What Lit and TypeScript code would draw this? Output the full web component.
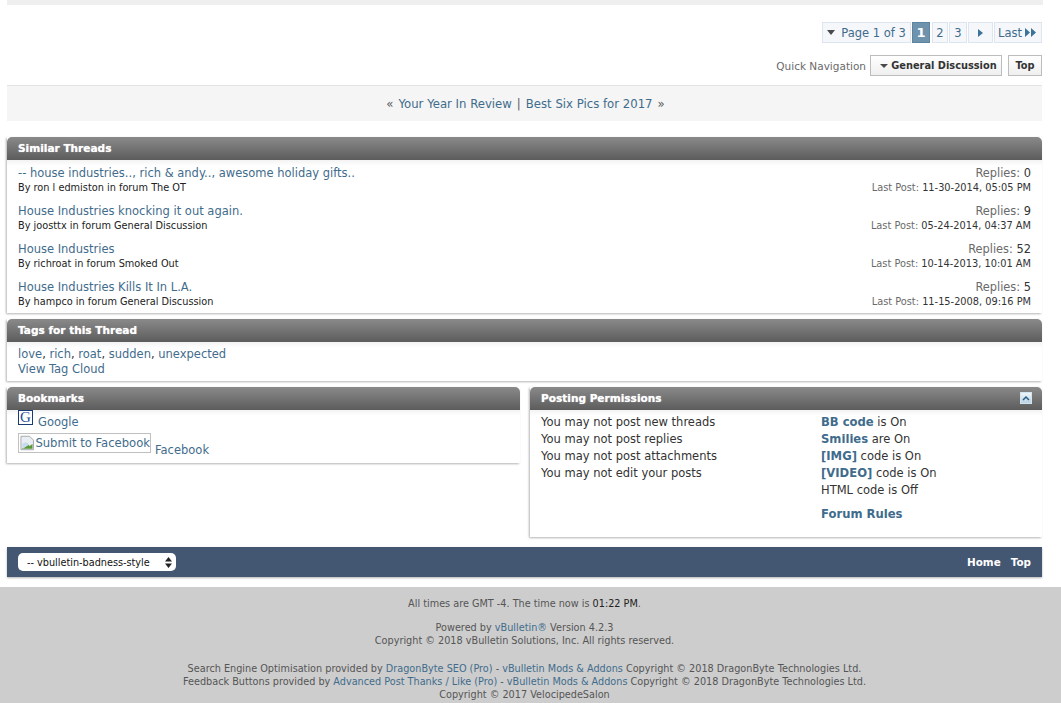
import { LitElement, html, css } from "lit";
import { customElement } from "lit/decorators.js";

const threads = [
  ["-- house industries.., rich & andy.., awesome holiday gifts..", "ron l edmiston", "The OT", "0", "11-30-2014, 05:05 PM"],
  ["House Industries knocking it out again.", "joosttx", "General Discussion", "9", "05-24-2014, 04:37 AM"],
  ["House Industries", "richroat", "Smoked Out", "52", "10-14-2013, 10:01 AM"],
  ["House Industries Kills It In L.A.", "hampco", "General Discussion", "5", "11-15-2008, 09:16 PM"],
];

@customElement("app-root")
export class AppRoot extends LitElement {
  static styles = css`
    :host { display: block; height: 703px; overflow: hidden; background: #fff; font-family: "DejaVu Sans", Verdana, sans-serif; color: #3e3e3e; font-size: 11.5px; }
    a { color: #3f6c8c; text-decoration: none; }
    .main { padding: 0 19px 0 7px; }
    .topband { height: 5px; background: #efefef; margin-right: -1px; }
    .pager { display: flex; justify-content: flex-end; gap: 1px; margin-top: 17px; height: 21px; font-size: 11.5px; }
    .pg { border: 1px solid #dde6f0; background: #f5f7fb; color: #3f6c8c; display: flex; align-items: center; justify-content: center; box-sizing: border-box; height: 21px; }
    .pg.label { width: 89px; gap: 6px; }
    .pg.cur { width: 18px; background: #6f93ad; border-color: #5c83a0; color: #fff; font-weight: bold; font-size: 13px; }
    .pg.n2 { width: 16px; margin-left: 1px; }
    .pg.n3 { width: 18px; }
    .pg.next { width: 25px; }
    .pg.last { width: 48px; gap: 3px; justify-content: flex-start; padding-left: 3px; }
    .tri-d { width: 0; height: 0; border: 4px solid transparent; border-top: 5px solid #4a4a4a; border-bottom: 0; }
    .tri-r { width: 0; height: 0; border: 4px solid transparent; border-left: 5px solid #3e7399; border-right: 0; }
    .qn { display: flex; justify-content: flex-end; align-items: center; margin-top: 12px; height: 21px; }
    .qn .lbl { color: #6a6a6a; margin-right: 4px; font-size: 10.5px; }
    .qbtn { border: 1px solid #bdbdbd; background: linear-gradient(#fff, #efefef); height: 21px; box-sizing: border-box; display: flex; align-items: center; justify-content: center; font-weight: bold; font-size: 9.8px; color: #333; }
    .qbtn.gd { width: 132px; gap: 3px; margin-right: 6px; padding-left: 5px; }
    .qbtn.gd .tri-d { border-width: 4px; border-top-width: 4px; border-bottom: 0; }
    .qbtn.top { width: 34px; }
    .prevnext { margin-top: 9px; height: 35px; background: #f5f5f5; border-top: 1px solid #e4e4e4; display: flex; align-items: center; justify-content: center; font-size: 11.7px; color: #5a5a5a; gap: 5px; padding-left: 2px; }
    .block { box-shadow: -1px 1px 2px #b5b5b5; background: #fff; }
    .head { height: 23px; border-radius: 5px 5px 0 0; background: linear-gradient(#8a8a8a, #5c5c5c); color: #fff; font-weight: bold; font-size: 10.55px; display: flex; align-items: center; justify-content: space-between; padding: 0 11px 1px; box-sizing: border-box; text-shadow: 0 0 1px #ddd; }
    .body { background: linear-gradient(#f3f3f3, #fff 6px); }
    .similar { margin-top: 16px; }
    .similar .body { padding: 6px 11px 3px 11px; height: 153px; box-sizing: border-box; }
    .thr { display: flex; justify-content: space-between; height: 38px; }
    .thr .t { font-size: 11.5px; line-height: 15px; display: block; }
    .thr .s { font-size: 9.75px; line-height: 14px; color: #222; }
    .thr .r { text-align: right; }
    .rep { font-size: 11.4px; line-height: 15px; color: #6a6a6a; }
    .rep b { font-weight: normal; color: #333; }
    .lp { font-size: 9.8px; line-height: 14px; color: #6a6a6a; }
    .lp b { font-weight: normal; color: #333; }
    .tags { margin-top: 6px; }
    .tags .body { height: 39px; box-sizing: border-box; padding: 5px 11px 0; font-size: 11.5px; line-height: 15px; color: #333; }
    .cols { display: flex; gap: 10px; margin-top: 6px; align-items: flex-start; }
    .bm { width: 513px; flex: none; }
    .bm .body { height: 53px; box-sizing: border-box; padding: 0 11px; font-size: 11.5px; }
    .row1 { height: 23px; display: flex; gap: 5px; }
    .row1 a { line-height: 24px; }
    .g { width: 15px; height: 15px; box-sizing: border-box; border: 1px solid #1a3a78; font: 15px/13px "Liberation Serif", serif; color: #1e4e9a; text-align: center; background: #fff; }
    .row2 { display: flex; gap: 4px; height: 28px; }
    .broken { width: 133px; height: 20px; box-sizing: border-box; border: 1px solid #c0c0c0; display: flex; align-items: center; color: #3f6c8c; white-space: nowrap; overflow: hidden; padding-left: 1px; font-size: 11.6px; }
    .row2 a.fb { align-self: flex-end; line-height: 15px; margin-bottom: 3px; }
    .pp { flex: 1; }
    .pp .body { height: 127px; box-sizing: border-box; padding: 4px 11px; display: flex; font-size: 11.5px; line-height: 17px; color: #333; }
    .pp .c1 { width: 280px; }
    .pp .c2 a { font-weight: bold; font-size: 11.6px; }
    .pp .rules { margin-top: 7px; display: block; }
    .coll { width: 12px; height: 12px; background: linear-gradient(#eef5fa, #b9d3e6); border: 1px solid #d5e3ee; box-sizing: border-box; margin-right: -1px; display: flex; align-items: center; justify-content: center; }
    .bar { margin-top: 10px; height: 30px; background: #435672; box-shadow: 0 1px 2px #b5b5b5; display: flex; align-items: center; justify-content: space-between; padding: 0 11px; color: #fff; font-weight: bold; font-size: 10.4px; box-sizing: border-box; }
    .sel { width: 158px; height: 18px; border-radius: 5px; background: #fff; color: #111; font-weight: normal; font-size: 9.7px; display: flex; align-items: center; justify-content: space-between; padding: 0 4px 0 9px; box-sizing: border-box; }
    .bar .links { display: flex; gap: 10px; }
    .foot { margin-top: 10px; background: #cdcdcd; height: 116px; text-align: center; font-size: 9.7px; line-height: 13px; color: #555; padding: 10px 12px 0 0; box-sizing: border-box; }
    .foot b { font-weight: normal; color: #222; }
    .foot p { margin: 0; }
    .foot .p1 { margin-bottom: 11px; }
    .foot .p2 { margin-bottom: 15px; }
  `;

  render() {
    return html`
      <div class="main">
        <div class="topband"></div>
        <div class="pager">
          <div class="pg label"><span class="tri-d"></span>Page 1 of 3</div>
          <div class="pg cur">1</div>
          <div class="pg n2">2</div>
          <div class="pg n3">3</div>
          <div class="pg next"><span class="tri-r"></span></div>
          <div class="pg last">Last<svg width="11" height="9" viewBox="0 0 11 9"><path d="M0 0l5 4.5-5 4.5zM6 0l5 4.5-5 4.5z" fill="#3e7399"/></svg></div>
        </div>
        <div class="qn">
          <span class="lbl">Quick Navigation</span>
          <div class="qbtn gd"><span class="tri-d"></span>General Discussion</div>
          <div class="qbtn top">Top</div>
        </div>
        <div class="prevnext"><span>«</span><a href="#">Your Year In Review</a><span>|</span><a href="#">Best Six Pics for 2017</a><span>»</span></div>

        <div class="block similar">
          <div class="head">Similar Threads</div>
          <div class="body">
            ${threads.map((t) => html`
              <div class="thr">
                <div>
                  <a class="t" href="#">${t[0]}</a>
                  <div class="s">By ${t[1]} in forum ${t[2]}</div>
                </div>
                <div class="r">
                  <div class="rep">Replies: <b>${t[3]}</b></div>
                  <div class="lp">Last Post: <b>${t[4]}</b></div>
                </div>
              </div>`)}
          </div>
        </div>

        <div class="block tags">
          <div class="head">Tags for this Thread</div>
          <div class="body">
            <a href="#">love</a>, <a href="#">rich</a>, <a href="#">roat</a>, <a href="#">sudden</a>, <a href="#">unexpected</a><br />
            <a href="#">View Tag Cloud</a>
          </div>
        </div>

        <div class="cols">
          <div class="block bm">
            <div class="head">Bookmarks</div>
            <div class="body">
              <div class="row1"><span class="g">G</span><a href="#">Google</a></div>
              <div class="row2">
                <span class="broken">
                  <svg width="16" height="16" viewBox="0 0 16 16"><path d="M1 1h9l4 4v10H1z" fill="#e8eef4" stroke="#a8a8a8"/><path d="M2 14l5-6 3 3 3-2v5z" fill="#5a9a3a"/><path d="M2 9l4-2 3 3-6 4z" fill="#c9dcef"/></svg>Submit to Facebook
                </span>
                <a class="fb" href="#">Facebook</a>
              </div>
            </div>
          </div>
          <div class="block pp">
            <div class="head">Posting Permissions
              <span class="coll"><svg width="8" height="6" viewBox="0 0 8 6"><path d="M1 5l3-3 3 3" fill="none" stroke="#2a5c84" stroke-width="1.5"/></svg></span>
            </div>
            <div class="body">
              <div class="c1">
                You may not post new threads<br />
                You may not post replies<br />
                You may not post attachments<br />
                You may not edit your posts
              </div>
              <div class="c2">
                <a href="#">BB code</a> is On<br />
                <a href="#">Smilies</a> are On<br />
                <a href="#">[IMG]</a> code is On<br />
                <a href="#">[VIDEO]</a> code is On<br />
                HTML code is Off
                <a class="rules" href="#">Forum Rules</a>
              </div>
            </div>
          </div>
        </div>

        <div class="bar">
          <div class="sel">-- vbulletin-badness-style
            <svg width="7" height="11" viewBox="0 0 7 11"><path d="M3.5 0L7 4.5H0zM3.5 11L0 6.5h7z" fill="#222"/></svg>
          </div>
          <div class="links"><span>Home</span><span>Top</span></div>
        </div>
      </div>
      <div class="foot">
        <p class="p1">All times are GMT -4. The time now is <b>01:22 PM</b>.</p>
        <p>Powered by <a href="#">vBulletin®</a> Version 4.2.3</p>
        <p class="p2">Copyright © 2018 vBulletin Solutions, Inc. All rights reserved.</p>
        <p>Search Engine Optimisation provided by <a href="#">DragonByte SEO (Pro)</a> - <a href="#">vBulletin Mods &amp; Addons</a> Copyright © 2018 DragonByte Technologies Ltd.</p>
        <p>Feedback Buttons provided by <a href="#">Advanced Post Thanks / Like (Pro)</a> - <a href="#">vBulletin Mods &amp; Addons</a> Copyright © 2018 DragonByte Technologies Ltd.</p>
        <p>Copyright © 2017 VelocipedeSalon</p>
      </div>
    `;
  }
}
